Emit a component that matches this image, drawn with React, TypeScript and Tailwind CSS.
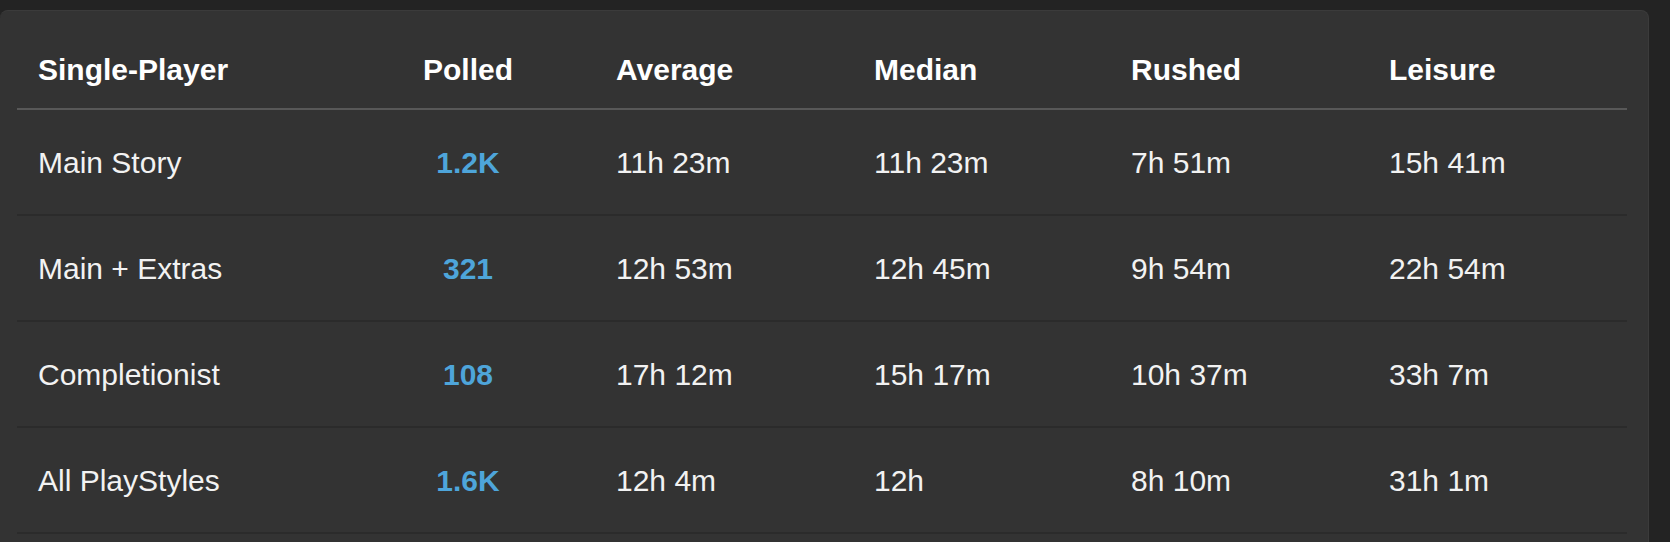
const columns = ['Single-Player', 'Polled', 'Average', 'Median', 'Rushed', 'Leisure'];

type Row = {
  label: string;
  polled: string;
  average: string;
  median: string;
  rushed: string;
  leisure: string;
};

const rows: Row[] = [
  { label: 'Main Story', polled: '1.2K', average: '11h 23m', median: '11h 23m', rushed: '7h 51m', leisure: '15h 41m' },
  { label: 'Main + Extras', polled: '321', average: '12h 53m', median: '12h 45m', rushed: '9h 54m', leisure: '22h 54m' },
  { label: 'Completionist', polled: '108', average: '17h 12m', median: '15h 17m', rushed: '10h 37m', leisure: '33h 7m' },
  { label: 'All PlayStyles', polled: '1.6K', average: '12h 4m', median: '12h', rushed: '8h 10m', leisure: '31h 1m' },
];

const gridCols = 'grid grid-cols-[258px_324px_258px_257px_256px_256px] items-center';
const cellPad = ['pl-[21px]', 'pl-[62px] text-center', 'pl-[17px]', 'pl-[17px]', 'pl-[17px]', 'pl-[19px]'];

export default function App() {
  return (
    <div
      className="h-[542px] w-[1670px] overflow-hidden bg-[#232323] pt-[10px]"
      style={{ fontFamily: '"Liberation Sans", Arial, sans-serif' }}
    >
      <div className="h-[560px] w-[1649px] rounded-[8px] border border-l-0 border-[#3b3b3b] bg-[#333333] pl-[17px] pr-[21px] pt-[20px]">
        <div className={`${gridCols} h-[79px] border-b-2 border-[#585858] text-[30px] font-bold text-white`}>
          {columns.map((col, i) => (
            <div key={col} className={`${cellPad[i]} pb-[1px]`}>
              {col}
            </div>
          ))}
        </div>

        {rows.map((row) => (
          <div
            key={row.label}
            className={`${gridCols} h-[106px] border-b-2 border-[#2b2b2b] text-[30px] text-[#f2f2f2]`}
          >
            <div className={cellPad[0]}>{row.label}</div>
            <div className={`${cellPad[1]} font-bold text-[#4ea5da]`}>{row.polled}</div>
            <div className={cellPad[2]}>{row.average}</div>
            <div className={cellPad[3]}>{row.median}</div>
            <div className={cellPad[4]}>{row.rushed}</div>
            <div className={cellPad[5]}>{row.leisure}</div>
          </div>
        ))}
      </div>
    </div>
  );
}
